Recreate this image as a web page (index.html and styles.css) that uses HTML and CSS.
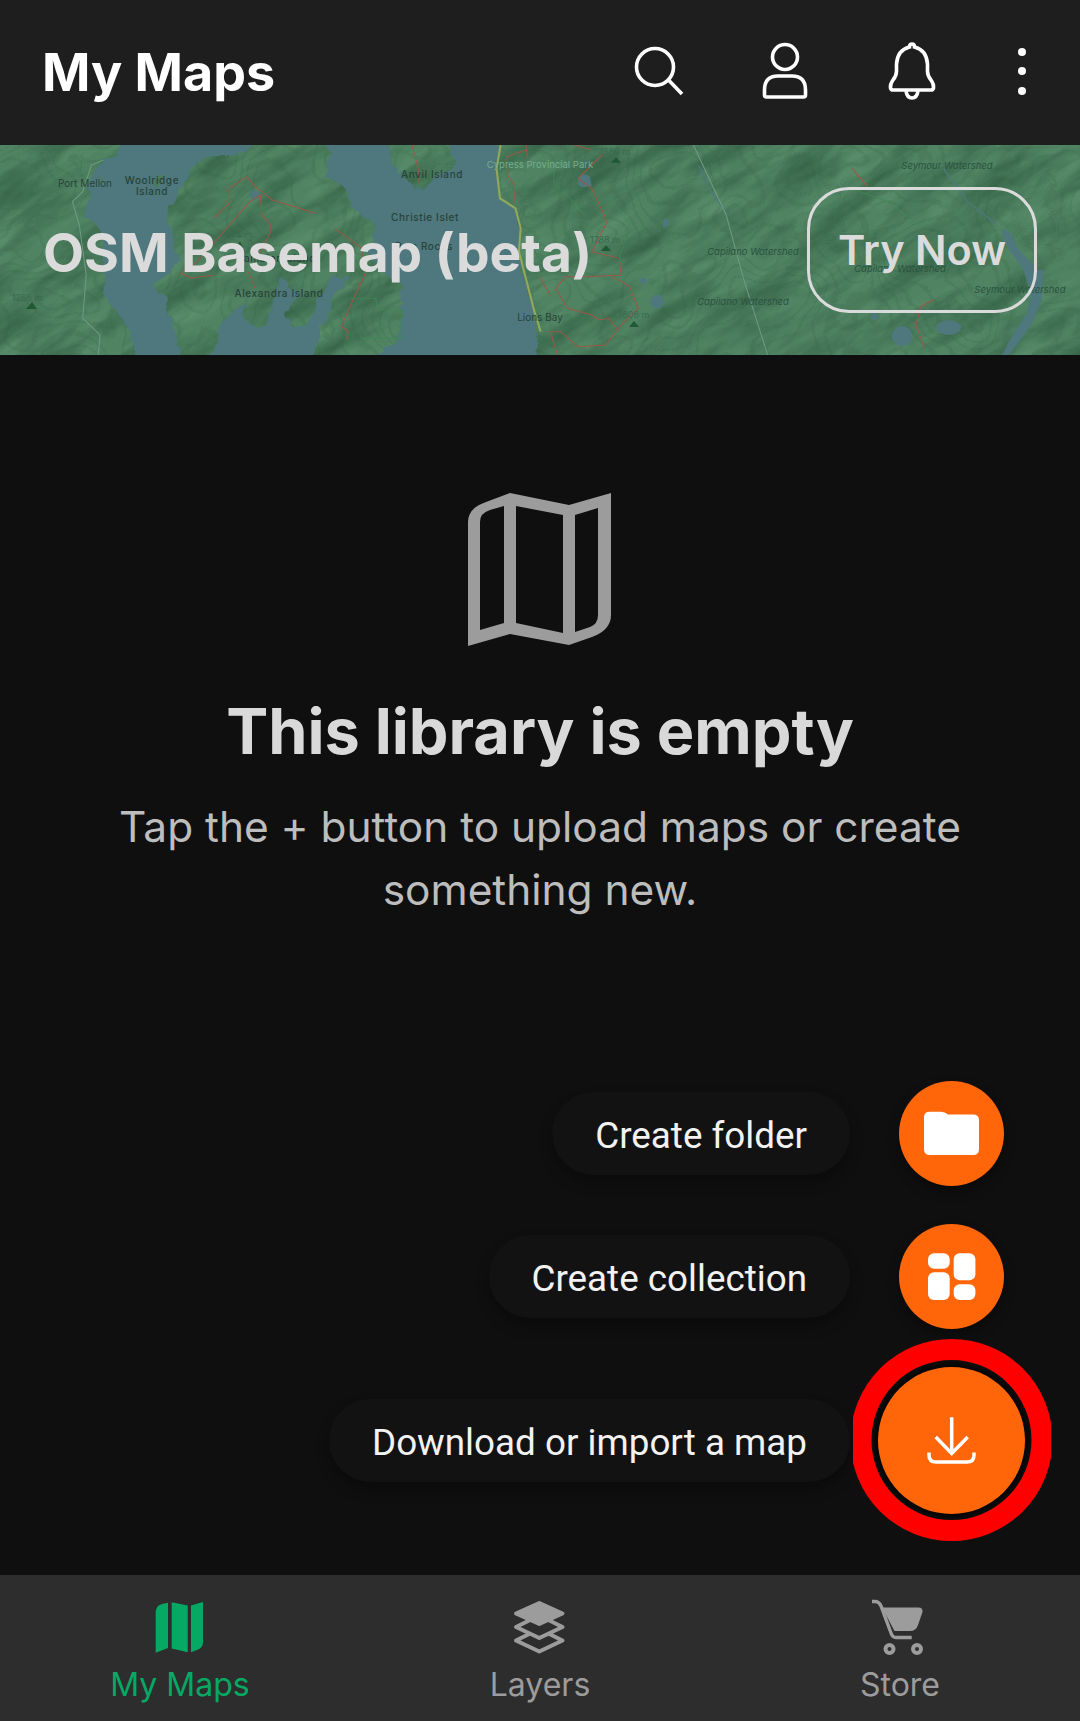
FILE: index.html
```html
<!DOCTYPE html>
<html lang="en">
<head>
    <meta charset="UTF-8">
    <meta name="viewport" content="width=device-width,user-scalable=no">
    <title>My Maps</title>
    <link rel="stylesheet" href="styles.css">
</head>
<body>
<section class="app">
    <header class="top">
        <h1 class="top-title">My Maps</h1>
        <nav class="top-icons">
            <svg class="top-icon" viewBox="0 0 56 60"><circle cx="25" cy="27" r="18.5"/><path d="M38.500 40 L52 54"/></svg>
            <svg class="top-icon" viewBox="0 0 56 60"><circle cx="28" cy="17" r="12.500"/><path d="M7.500 55 V50 Q7.500 36 21 36 H35 Q48.500 36 48.500 50 V55 Q48.500 57 46.500 57 H9.500 Q7.500 57 7.500 55Z"/></svg>
            <svg class="top-icon" viewBox="0 0 56 60"><path d="M25.500 7 Q25.500 4 28 4 Q30.500 4 30.500 7 Q42.500 10 43.500 24 V31 Q43.500 36 47 40 Q50 44 49.500 48 Q49 50 47 50 H9 Q7 50 6.500 48 Q6 44 9 40 Q12.500 36 12.500 31 V24 Q13.500 10 25.500 7Z"/><path d="M22 51 Q23 58 28 58 Q33 58 34 51"/></svg>
            <svg class="top-dots" viewBox="0 0 16 60"><circle cx="8" cy="12" r="4"/><circle cx="8" cy="31" r="4"/><circle cx="8" cy="51" r="4"/></svg>
        </nav>
    </header>

    <section class="promo">
        <svg class="promo-map" viewBox="0 0 1080 210" preserveAspectRatio="none">
            <defs>
                <filter id="terrain" x="0" y="0" width="100%" height="100%" color-interpolation-filters="sRGB">
                    <feTurbulence type="fractalNoise" baseFrequency="0.012 0.045" numOctaves="5" seed="7"/>
                    <feColorMatrix values="0 0 0 0 0.22  0 0 0 0 0.40  0 0 0 0 0.29  2.400 0 0 0 -0.950"/>
                </filter>
                <filter id="terrain-light" x="0" y="0" width="100%" height="100%" color-interpolation-filters="sRGB">
                    <feTurbulence type="fractalNoise" baseFrequency="0.016 0.06" numOctaves="4" seed="21"/>
                    <feColorMatrix values="0 0 0 0 0.38  0 0 0 0 0.58  0 0 0 0 0.44  1.600 0 0 0 -0.750"/>
                </filter>
                <filter id="contours" x="0" y="0" width="100%" height="100%" color-interpolation-filters="sRGB">
                    <feTurbulence type="fractalNoise" baseFrequency="0.008" numOctaves="3" seed="4"/>
                    <feColorMatrix values="0 0 0 0 0.20  0 0 0 0 0.36  0 0 0 0 0.26  1 0 0 0 0"/>
                    <feComponentTransfer>
                        <feFuncA type="discrete" tableValues="0 0 0 0 0 0 0 0 0 0 0 0 0 0 0 .16 0 0 0 .16 0 0 0 .16 0 0 0 .16 0 0 0 .16 0 0 0 .16 0 0 0 .16 0 0 0 .16 0 0 0 0 0 0 0 0 0 0 0 0 0 0 0 0 0"/>
                    </feComponentTransfer>
                </filter>
                <filter id="coast" filterUnits="userSpaceOnUse" x="-60" y="-60" width="1720" height="760" color-interpolation-filters="sRGB">
                    <feTurbulence type="fractalNoise" baseFrequency="0.025" numOctaves="4" seed="11" result="wobble"/>
                    <feDisplacementMap in="SourceGraphic" in2="wobble" scale="34" xChannelSelector="R" yChannelSelector="G"/>
                </filter>
            </defs>
            <rect class="map-land" width="1080" height="210"/>
            <rect transform="rotate(-32 540 105)" x="-300" y="-600" width="1680" height="1400" filter="url(#terrain-light)"/>
            <rect transform="rotate(-32 540 105)" x="-300" y="-600" width="1680" height="1400" filter="url(#terrain)"/>
            <rect width="1080" height="210" filter="url(#contours)"/>

            <!-- left half, traced at 2.9x / 3x -->
            <g transform="scale(0.3448 0.3333)">
                <path class="map-water" filter="url(#coast)" fill-rule="evenodd" d="M375 -40 L335 30 300 50 265 85 255 170 250 215 290 250 300 300 300 400 320 480 360 530 385 590 390 680 1568 680 1555 560 1530 440 1505 330 1510 250 1495 190 1450 160 1440 80 1445 -40Z
                M485 200 L520 130 560 70 600 30 700 30 770 -40 945 -40 955 30 945 90 1000 130 1030 190 1090 240 1080 285 1055 310 1110 370 1160 430 1165 520 1150 590 1110 615 1000 680 885 680 920 590 950 500 990 430 1010 395 960 395 920 470 890 540 850 550 830 510 870 440 810 400 790 480 760 555 710 530 700 490 730 470 690 480 640 530 600 680 530 680 500 530 480 460 440 425 490 380 520 340 490 240Z
                M1110 -40 L1285 -40 1320 50 1300 70 1260 100 1225 140 1190 115 1140 60Z
                M440 110 L470 85 470 110 450 135Z"/>
                <path class="map-lake" d="M725 145 Q738 125 752 145 Q745 168 730 165Z"/>
                <path class="map-road" d="M620 220 L665 175 665 130 715 95 740 125 765 145 790 165 915 205"/>
                <path class="map-road" d="M755 150 L725 170 665 240 600 320 560 360 525 385 555 400 600 392 620 392"/>
                <path class="map-road" d="M755 150 L760 210 785 240 785 260 750 330"/>
                <path class="map-road" d="M720 380 L740 430"/>
                <path class="map-road" d="M970 250 L1010 280 1050 310 1060 385 1030 450 990 545 1010 560 1005 585"/>
                <path class="map-road" d="M1195 0 L1215 80 1215 115"/>
                <path class="map-road" d="M1525 0 L1530 40 M1470 35 L1525 15 M1470 35 L1472 90 1495 125 1490 175"/>
                <path class="map-highway" d="M1452 0 L1440 70 1450 160 1495 190 1510 250 1505 320 1525 400 1550 500 1568 560"/>
                <path class="map-track" d="M300 45 L265 60 240 140 210 170 230 240 250 390 240 520 290 570 285 630"/>
                <path class="map-park" d="M1015 460 H1090 L1095 495 H1165 V580 H1045 V575"/>
            </g>

            <!-- right half -->
            <g transform="translate(540 0) scale(0.3448 0.3333)">
                <path class="map-lake" d="M110 100 Q125 80 145 95 L150 122 Q130 130 112 122Z"/>
                <ellipse class="map-lake" cx="340" cy="470" rx="20" ry="20"/>
                <ellipse class="map-lake" cx="365" cy="233" rx="8" ry="12"/>
                <ellipse class="map-lake" cx="300" cy="407" rx="10" ry="9"/>
                <ellipse class="map-lake" cx="1050" cy="573" rx="30" ry="30"/>
                <ellipse class="map-lake" cx="1185" cy="548" rx="36" ry="22"/>
                <ellipse class="map-lake" cx="970" cy="515" rx="10" ry="10"/>
                <path class="map-lake" d="M1340 250 L1365 265 1385 310 1445 375 1460 375 1455 460 1430 530 1390 590 1360 630 1340 630 1370 570 1410 510 1425 450 1400 370 1365 320 1345 290Z"/>
                <path class="map-stream" d="M460 60 L490 130 545 210 M1170 70 L1240 170 1320 235"/>
                <path class="map-road" d="M185 25 L125 85 110 100 150 130 195 230 150 320 230 340 235 390 135 395 75 395 45 430 80 490 150 510 170 525 200 520 225 555"/>
                <path class="map-road" d="M210 395 L260 425 285 490 240 535 190 600 110 605 60 560 30 560 50 630"/>
                <path class="map-road" d="M0 400 L30 450 M100 0 L150 15 M905 70 L950 125 M1140 465 L1105 485 1090 540 1115 610"/>
                <path class="map-track" d="M445 0 L540 210 590 400 660 630"/>
                <path class="map-park" d="M40 70 V110 L130 210 M200 160 L260 235 230 340"/>
                <path class="map-park" d="M900 130 L1010 170 1100 240"/>
            </g>

            <path class="map-peak" d="M26 164 L32 157 37 164Z"/>
            <path class="map-peak" d="M236 103 L240 96 243 103Z"/>
            <path class="map-peak" d="M611 18 L616 12 621 18Z"/>
            <path class="map-peak" d="M601 106 L606 100 611 106Z"/>
            <path class="map-peak" d="M629 182 L634 176 639 182Z"/>

            <text class="map-label" x="85" y="42" text-anchor="middle">Port Mellon</text>
            <text class="map-label wide" x="152" y="39" text-anchor="middle">Woolridge</text>
            <text class="map-label wide" x="152" y="50" text-anchor="middle">Island</text>
            <text class="map-label wide" x="432" y="33" text-anchor="middle">Anvil Island</text>
            <text class="map-label wide" x="425" y="76" text-anchor="middle">Christie Islet</text>
            <text class="map-label wide" x="424" y="105" text-anchor="middle">Pam Rocks</text>
            <text class="map-label wide" x="279" y="152" text-anchor="middle">Alexandra Island</text>
            <text class="map-label wide" x="276" y="117" text-anchor="middle">Gambier Island</text>
            <text class="map-label" x="540" y="176" text-anchor="middle">Lions Bay</text>
            <text class="map-height" x="27" y="156" text-anchor="middle">1266 m</text>
            <text class="map-height" x="238" y="93" text-anchor="middle">844 m</text>
            <text class="map-height" x="615" y="10" text-anchor="middle">1589 m</text>
            <text class="map-height" x="605" y="98" text-anchor="middle">1788 m</text>
            <text class="map-height" x="634" y="173" text-anchor="middle">1606 m</text>
            <text class="map-park-label" x="540" y="23" text-anchor="middle">Cypress Provincial Park</text>
            <text class="map-area" x="947" y="24" text-anchor="middle">Seymour Watershed</text>
            <text class="map-area" x="1020" y="148" text-anchor="middle">Seymour Watershed</text>
            <text class="map-area" x="753" y="110" text-anchor="middle">Capilano Watershed</text>
            <text class="map-area" x="743" y="160" text-anchor="middle">Capilano Watershed</text>
            <text class="map-area" x="900" y="127" text-anchor="middle">Capilano Watershed</text>
        </svg>
        <h2 class="promo-title">OSM Basemap (beta)</h2>
        <a class="promo-btn" href="javascript:;">Try Now</a>
    </section>

    <main class="content">
        <div class="empty">
            <svg class="empty-icon" viewBox="0 0 200 190">
                <path fill-rule="evenodd" d="M28 176 V52 Q28 38 46 32 L70 23 L129 35 L171 23 V145 Q171 160 152 167 L129 175 L70 164Z
                M40 160 L64 153 V36 L50 40 Q40 43 40 52Z
                M76 36 V153 L123 163 V45Z
                M135 45 V162 L150 157 Q158 154 158 145 V38Z"/>
            </svg>
            <h2 class="empty-title">This library is empty</h2>
            <p class="empty-text">Tap the + button to upload maps or create something new.</p>
        </div>

        <div class="fab-menu">
            <div class="fab-row">
                <span class="fab-label">Create folder</span>
                <div class="fab-slot">
                    <div class="fab">
                        <svg class="fab-icon" viewBox="0 0 105 105"><path d="M25 36 Q25 30.700 31 30.700 H42 Q46 30.700 49 33.500 H74 Q80 33.500 80 39 V68 Q80 74 74 74 H31 Q25 74 25 68Z"/></svg>
                    </div>
                </div>
            </div>
            <div class="fab-row">
                <span class="fab-label">Create collection</span>
                <div class="fab-slot">
                    <div class="fab">
                        <svg class="fab-icon" viewBox="0 0 105 105">
                            <rect x="29" y="29.300" width="21.700" height="15.400" rx="6"/>
                            <rect x="29" y="48.300" width="21.700" height="27.700" rx="6"/>
                            <rect x="54.700" y="29.300" width="21.700" height="27" rx="6"/>
                            <rect x="54.700" y="60.300" width="21.700" height="15.700" rx="6"/>
                        </svg>
                    </div>
                </div>
            </div>
            <div class="fab-row">
                <span class="fab-label">Download or import a map</span>
                <div class="fab-slot">
                    <div class="fab fab-main">
                        <svg class="fab-stroke" viewBox="0 0 147 147">
                            <path d="M73.700 50.300 V86.500 M57.700 70 L73.700 86.500 L89.700 70"/>
                            <path d="M51 85.500 V88 Q51 95 58 95 H89 Q96 95 96 88 V85.500"/>
                        </svg>
                        <svg class="fab-ring" viewBox="0 0 198 202"><circle cx="98.500" cy="101" r="90.500"/></svg>
                    </div>
                </div>
            </div>
        </div>
    </main>

    <footer class="tabs">
        <a class="tab active" href="javascript:;">
            <svg class="tab-icon" viewBox="0 0 80 75">
                <path d="M15.700 62.700 V23 Q15.700 15.500 22 14 L28 12.700 V58Z"/>
                <path d="M31.700 12.300 L47.700 15.500 V62.300 L31.700 58.500Z"/>
                <path d="M51 15.500 L63 12 V52 Q63 58 57 60 L51 62.300Z"/>
            </svg>
            <span>My Maps</span>
        </a>
        <a class="tab" href="javascript:;">
            <svg class="tab-icon" viewBox="0 0 80 75">
                <path class="layer-line" d="M39.300 39 L62.500 50.500 L39.300 61.500 L16 50.500Z"/>
                <path class="layer-line" d="M39.300 25.500 L62.500 37 L39.300 48 L16 37Z"/>
                <path class="layer-top" d="M39.300 13 L62.500 23.500 L39.300 34 L16 23.500Z"/>
            </svg>
            <span>Layers</span>
        </a>
        <a class="tab" href="javascript:;">
            <svg class="tab-icon" viewBox="0 0 80 75">
                <path d="M22 17.500 H58.500 Q63 17.500 62.500 22 L58 35 Q56 41 50 41 H34.500Z"/>
                <path class="cart-line" d="M12 11.500 H15 Q19 11.500 21 16 L31 43 Q32.500 47.500 36 47.500 H51.700"/>
                <circle class="cart-wheel" cx="29.500" cy="59" r="4"/>
                <circle class="cart-wheel" cx="57" cy="59" r="4"/>
            </svg>
            <span>Store</span>
        </a>
    </footer>
</section>
</body>
</html>
```

FILE: styles.css
```css
html,body{
    margin:0;
    width:100%;
    height:100%;
    overflow:hidden;
}
body{
    background:#0f0f0f;
    font-family:Inter,"Noto Sans",sans-serif;
}
a{
    text-decoration:none;
}
h1,h2,p{
    margin:0;
}
.app{
    height:1721px;
    display:flex;
    flex-direction:column;
}

/* header */
.top{
    height:145px;
    flex:none;
    background:#1e1e1e;
    display:flex;
    align-items:center;
    justify-content:space-between;
    padding:0 50px 0 42px;
}
.top-title{
    font-size:52px;
    line-height:64px;
    font-weight:700;
    color:#fff;
}
.top-icons{
    display:flex;
    align-items:center;
    gap:71px;
    margin-bottom:5px;
}
.top-icon{
    width:56px;
    height:60px;
    fill:none;
    stroke:#fff;
    stroke-width:3.600;
    stroke-linecap:butt;
}
.top-dots{
    width:16px;
    height:60px;
    margin-left:3px;
    fill:#fff;
}

/* map banner */
.promo{
    height:210px;
    flex:none;
    position:relative;
    overflow:hidden;
    display:flex;
    align-items:center;
    justify-content:space-between;
    padding:0 43px;
    box-sizing:border-box;
    background:#4f8362;
}
.promo-map{
    position:absolute;
    left:0;
    top:0;
    width:1080px;
    height:210px;
}
.map-land{
    fill:#4f8362;
}
.map-water{
    fill:#4e787e;
}
.map-lake{
    fill:#4e787e;
}
.map-road{
    fill:none;
    stroke:#9a5848;
    stroke-width:3;
}
.map-highway{
    fill:none;
    stroke:#93a85c;
    stroke-width:6;
}
.map-track{
    fill:none;
    stroke:#6f9a83;
    stroke-width:3;
}
.map-park{
    fill:none;
    stroke:#3f8a55;
    stroke-width:2.500;
}
.map-stream{
    fill:none;
    stroke:#4e787e;
    stroke-width:4;
}
.map-peak{
    fill:#1f5a34;
}
.map-label{
    font-size:10px;
    fill:#27433a;
}
.map-label.wide{
    letter-spacing:.6px;
    font-weight:500;
}
.map-height{
    font-size:9px;
    fill:#3a6a50;
}
.map-park-label{
    font-size:9.500px;
    fill:#76ad90;
}
.map-area{
    font-size:9.500px;
    font-style:italic;
    fill:#2a5240;
}
.promo-title{
    position:relative;
    margin-top:5px;
    font-size:53.300px;
    line-height:64px;
    font-weight:700;
    color:#dbdbdb;
}
.promo-btn{
    position:relative;
    width:230px;
    height:126px;
    box-sizing:border-box;
    border:3px solid #dbdbdb;
    border-radius:42px;
    display:flex;
    align-items:center;
    justify-content:center;
    font-size:41.500px;
    font-weight:600;
    color:#dbdbdb;
}

/* empty state */
.content{
    flex:1;
    display:flex;
    flex-direction:column;
}
.empty{
    padding-top:138px;
    display:flex;
    flex-direction:column;
    align-items:center;
    text-align:center;
}
.empty-icon{
    width:200px;
    height:190px;
    margin:-23px 0 -14px;
    fill:#9c9c9c;
}
.empty-title{
    margin-top:49px;
    font-size:63px;
    line-height:72px;
    font-weight:700;
    color:#d9d9d9;
}
.empty-text{
    width:900px;
    margin-top:28px;
    font-size:42.400px;
    line-height:63px;
    color:#bdbdbd;
}

/* add menu */
.fab-menu{
    margin-top:auto;
    padding:0 55px 61px 0;
    display:flex;
    flex-direction:column;
    align-items:flex-end;
    gap:38px;
}
.fab-row{
    display:flex;
    align-items:center;
    gap:28px;
}
.fab-label{
    height:83px;
    box-sizing:border-box;
    padding:4px 43px 0;
    border-radius:42px;
    display:flex;
    align-items:center;
    background:#121212;
    box-shadow:0 8px 14px rgba(0,0,0,.3);
    font-family:Roboto,sans-serif;
    font-size:36.800px;
    color:#f2f2f2;
}
.fab-slot{
    width:147px;
    display:flex;
    justify-content:center;
}
.fab{
    width:105px;
    height:105px;
    border-radius:50%;
    background:#ff660a;
    box-shadow:0 6px 12px rgba(0,0,0,.35);
    position:relative;
}
.fab-main{
    width:147px;
    height:147px;
    box-shadow:0 0 5px 4px #060606;
}
.fab-icon{
    display:block;
    width:105px;
    height:105px;
    fill:#fff;
}
.fab-stroke{
    display:block;
    width:147px;
    height:147px;
    fill:none;
    stroke:#fff;
    stroke-width:3.500;
}
.fab-ring{
    position:absolute;
    left:-25px;
    top:-28.500px;
    width:198px;
    height:202px;
    fill:none;
    stroke:#f00;
    stroke-width:21;
}

/* bottom nav */
.tabs{
    height:146px;
    flex:none;
    box-sizing:border-box;
    padding-top:15px;
    background:#2d2d2d;
    display:flex;
}
.tab{
    flex:1;
    display:flex;
    flex-direction:column;
    align-items:center;
    font-size:32px;
    line-height:40px;
    color:#9c9c9c;
}
.tab.active{
    color:#06a964;
}
.tab-icon{
    width:80px;
    height:75px;
    fill:currentColor;
}
.layer-top{
    stroke:currentColor;
    stroke-width:4;
    stroke-linejoin:round;
}
.layer-line{
    fill:#2d2d2d;
    stroke:currentColor;
    stroke-width:4;
    stroke-linejoin:round;
}
.cart-line{
    fill:none;
    stroke:currentColor;
    stroke-width:3.400;
}
.cart-wheel{
    fill:none;
    stroke:currentColor;
    stroke-width:4;
}
```
